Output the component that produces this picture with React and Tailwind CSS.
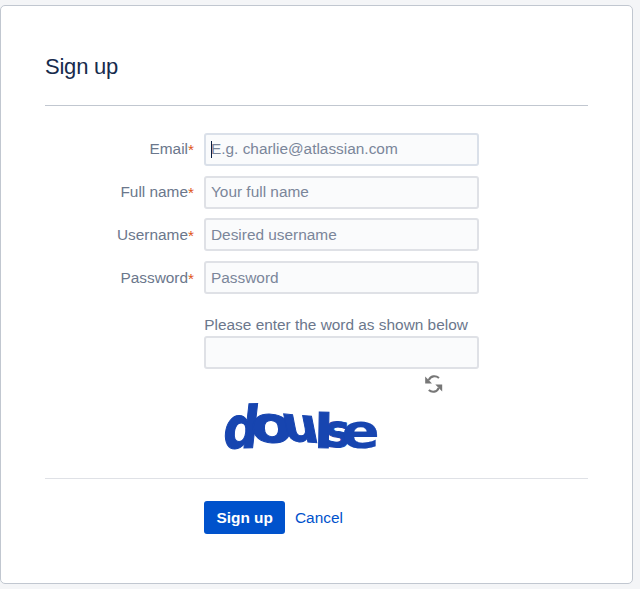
const fields = [
  { id: 'email', label: 'Email', hint: 'E.g. charlie@atlassian.com', type: 'email', caret: true },
  { id: 'fullname', label: 'Full name', hint: 'Your full name', type: 'text' },
  { id: 'username', label: 'Username', hint: 'Desired username', type: 'text' },
  { id: 'password', label: 'Password', hint: 'Password', type: 'password' },
];

function Field({ id, label, hint, type, caret }) {
  return (
    <div className="flex h-[33px] items-center">
      <label htmlFor={id} className="mr-[10px] w-[149px] text-right leading-[20px]">
        {label}
        <span className="inline-block translate-y-[0.6px] text-[#e0561a]">*</span>
      </label>
      <div className="relative">
        <input
          id={id}
          type={type}
          placeholder={hint}
          className={`block h-[33px] w-[275px] rounded-[3px] border-2 bg-[#fafbfc] px-[5px] placeholder:text-[#7a869a] placeholder:opacity-100 ${caret ? 'border-[#dae0e9]' : 'border-[#dfe1e6]'}`}
        />
        {caret && <span className="absolute top-[8px] left-[7px] h-[17px] w-px bg-[#091e42]" />}
      </div>
    </div>
  );
}

function RefreshIcon() {
  return (
    <svg width="18" height="18" viewBox="0 0 18 18" fill="none" stroke="#777" strokeWidth="2.1">
      <path d="M3.800 5.200C5.500 .8 10.500 .2 14 3" />
      <path d="M13.700 12.800C12 17.200 7 17.800 3.800 15" />
      <path d="M.2 1.500V8.500H7Z" fill="#777" stroke="none" />
      <path d="M17.200 16.500V9.500H10.300Z" fill="#777" stroke="none" />
    </svg>
  );
}

function Captcha() {
  return (
    <svg width="175" height="65" viewBox="0 0 175 65" fill="#1745b0" stroke="#1745b0" strokeWidth=".9" className="overflow-visible font-['DejaVu_Sans'] text-[44px] font-bold" role="img">
      <text transform="matrix(1.12 -.03 -.15 1.32 6.500 53.500)">d</text>
      <text transform="matrix(1.38 .08 .03 1.14 36 46)">o</text>
      <text transform="matrix(1.15 .1 .22 1.1 70 45)">u</text>
      <text transform="matrix(1.25 .05 -.02 1.07 99 52.500)">l</text>
      <text transform="matrix(.95 0 0 1.05 110 52)">s</text>
      <text transform="matrix(1.28 0 0 1.08 126.500 53)" strokeWidth=".2">e</text>
    </svg>
  );
}

export default function App() {
  return (
    <div className="h-[589px] w-[640px] overflow-hidden bg-[#f4f5f7] pt-[5px] font-['Liberation_Sans',Arial,sans-serif] text-[15.4px] text-[#6b778c]">
      <main className="h-[579px] w-[633px] rounded-[5px] border border-[#c1c7d0] bg-white px-[44px]">
        <h1 className="flex h-[100px] items-end border-b border-[#c1c7d0] pb-[25px] text-[22px] leading-[26px] tracking-[-0.01em] text-[#172b4d]">Sign up</h1>
        <form>
          <div className="flex flex-col gap-[9.86px] pt-[26.7px]">
            {fields.map((f) => <Field key={f.id} {...f} />)}
          </div>
          <div className="ml-[159.3px] h-[162px] w-[275px] pt-[21.1px]">
            <label htmlFor="captcha" className="block h-[21px] leading-[20px] whitespace-nowrap">Please enter the word as shown below</label>
            <input id="captcha" className="block h-[33px] w-full rounded-[3px] border-2 border-[#dfe1e6] bg-[#fafbfc] px-[5px]" />
            <div className="mt-[6px] ml-[220.7px]"><RefreshIcon /></div>
            <div className="mt-[2px] ml-[10.7px]"><Captcha /></div>
          </div>
          <div className="mt-[21.7px] flex items-center gap-[10px] border-t border-[#dfe1e6] pt-[22px] pl-[159px]">
            <button type="button" className="h-[33px] w-[81px] rounded-[3px] bg-[#0052cc] pl-[6.4px] pr-[6px] font-bold text-white">Sign up</button>
            <a href="#" className="text-[#0052cc]">Cancel</a>
          </div>
        </form>
      </main>
    </div>
  );
}
